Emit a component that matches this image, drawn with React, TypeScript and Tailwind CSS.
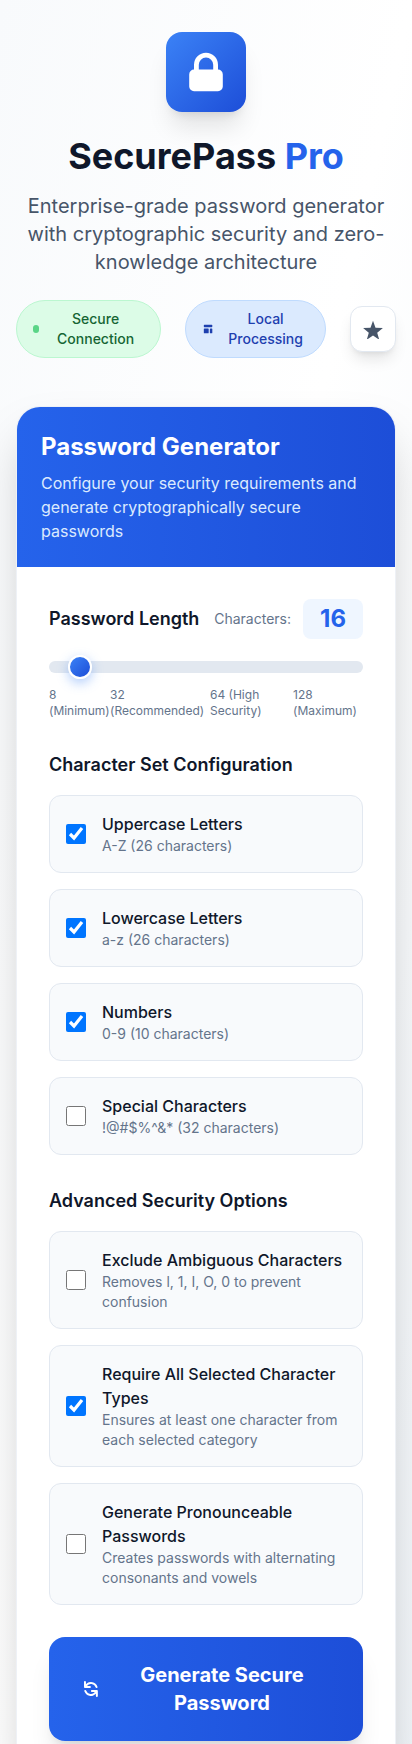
import { useState } from 'react';

type Option = { id: string; title: string; detail: string; on: boolean };

const characterSets: Option[] = [
  { id: 'uppercase', title: 'Uppercase Letters', detail: 'A-Z (26 characters)', on: true },
  { id: 'lowercase', title: 'Lowercase Letters', detail: 'a-z (26 characters)', on: true },
  { id: 'numbers', title: 'Numbers', detail: '0-9 (10 characters)', on: true },
  { id: 'special', title: 'Special Characters', detail: '!@#$%^&* (32 characters)', on: false },
];

const advanced: Option[] = [
  {
    id: 'ambiguous',
    title: 'Exclude Ambiguous Characters',
    detail: 'Removes l, 1, I, O, 0 to prevent confusion',
    on: false,
  },
  {
    id: 'require-all',
    title: 'Require All Selected Character Types',
    detail: 'Ensures at least one character from each selected category',
    on: true,
  },
  {
    id: 'pronounceable',
    title: 'Generate Pronounceable Passwords',
    detail: 'Creates passwords with alternating consonants and vowels',
    on: false,
  },
];

function OptionCard({ option }: { option: Option }) {
  return (
    <label
      htmlFor={option.id}
      className="flex cursor-pointer items-center gap-4 rounded-xl border border-[#e2e8f0] bg-[#f8fafc] p-4"
    >
      <input id={option.id} type="checkbox" defaultChecked={option.on} className="size-5 shrink-0" />
      <span className="flex-1">
        <span className="block font-medium text-[#0f172a]">{option.title}</span>
        <span className="block text-sm text-[#64748b]">{option.detail}</span>
      </span>
    </label>
  );
}

function OptionSection({ title, options }: { title: string; options: Option[] }) {
  return (
    <section className="mt-8">
      <h3 className="mb-4 text-lg font-semibold text-[#0f172a]">{title}</h3>
      <div className="grid gap-4">
        {options.map((option) => (
          <OptionCard key={option.id} option={option} />
        ))}
      </div>
    </section>
  );
}

const sliderClasses =
  'h-3 w-full cursor-pointer appearance-none rounded-lg bg-[#e2e8f0] ' +
  '[&::-webkit-slider-thumb]:size-6 [&::-webkit-slider-thumb]:appearance-none [&::-webkit-slider-thumb]:rounded-full ' +
  '[&::-webkit-slider-thumb]:border-2 [&::-webkit-slider-thumb]:border-solid [&::-webkit-slider-thumb]:border-white ' +
  '[&::-webkit-slider-thumb]:bg-[linear-gradient(135deg,#3b82f6,#1d4ed8)] ' +
  '[&::-webkit-slider-thumb]:shadow-[0_4px_12px_rgba(59,130,246,0.4)]';

export default function App() {
  const [length, setLength] = useState(16);

  return (
    <div className="min-h-screen bg-[linear-gradient(to_bottom_right,#f8fafc,#ffffff,#f1f5f9)] px-4 py-8 font-['Inter',sans-serif]">
      <header className="flex flex-col items-center text-center">
        <div className="mb-6 flex size-20 items-center justify-center rounded-2xl bg-[linear-gradient(to_bottom_right,#3b82f6,#1d4ed8)] shadow-xl">
          <svg className="size-12 text-white" fill="currentColor" viewBox="0 0 20 20" aria-hidden="true">
            <path
              fillRule="evenodd"
              clipRule="evenodd"
              d="M5 9V7a5 5 0 0110 0v2a2 2 0 012 2v5a2 2 0 01-2 2H5a2 2 0 01-2-2v-5a2 2 0 012-2zm8-2v2H7V7a3 3 0 016 0z"
            />
          </svg>
        </div>
        <h1 className="mb-4 text-4xl font-bold text-[#0f172a]">
          SecurePass <span className="text-[#2563eb]">Pro</span>
        </h1>
        <p className="mb-6 text-xl text-[#475569]">
          Enterprise-grade password generator with cryptographic security and zero-knowledge architecture
        </p>
        <div className="flex w-full items-center justify-center gap-6">
          <div className="flex items-center rounded-full border border-[#bbf7d0] bg-[#dcfce7] px-4 py-2 text-sm font-medium text-[#166534]">
            <span className="mr-2 h-2 w-2 rounded-full bg-[#22c55e] opacity-70" />
            Secure Connection
          </div>
          <div className="flex items-center rounded-full border border-[#bfdbfe] bg-[#dbeafe] px-4 py-2 text-sm font-medium text-[#1e40af]">
            <svg className="mr-2 h-4 w-4" fill="currentColor" viewBox="0 0 20 20" aria-hidden="true">
              <path d="M3 4a1 1 0 011-1h12a1 1 0 011 1v2a1 1 0 01-1 1H4a1 1 0 01-1-1V4zM3 10a1 1 0 011-1h6a1 1 0 011 1v6a1 1 0 01-1 1H4a1 1 0 01-1-1v-6zM14 9a1 1 0 00-1 1v6a1 1 0 001 1h2a1 1 0 001-1v-6a1 1 0 00-1-1h-2z" />
            </svg>
            Local Processing
          </div>
          <button
            type="button"
            aria-label="Favorite"
            className="shrink-0 rounded-xl border border-[#e2e8f0] bg-white p-3 text-[#475569] shadow-lg"
          >
            <svg className="size-5" fill="currentColor" viewBox="0 0 20 20" aria-hidden="true">
              <path d="M10 1.8l2.5 6.9 7.4.3-5.7 4.7 2 7L10 16.6l-6.2 4.1 2-7L.1 9l7.4-.3L10 1.8z" />
            </svg>
          </button>
        </div>
      </header>

      <main className="mt-12 overflow-hidden rounded-3xl border border-[#e2e8f0]/60 bg-white shadow-2xl">
        <div className="bg-[linear-gradient(to_right,#2563eb,#1d4ed8)] p-6">
          <h2 className="mb-2 text-2xl font-bold text-white">Password Generator</h2>
          <p className="text-[#dbeafe]">
            Configure your security requirements and generate cryptographically secure passwords
          </p>
        </div>

        <div className="p-8">
          <div className="mb-4 flex items-center justify-between">
            <label htmlFor="length" className="text-lg font-semibold text-[#0f172a]">
              Password Length
            </label>
            <div className="flex items-center gap-3">
              <span className="text-sm text-[#64748b]">Characters:</span>
              <output
                htmlFor="length"
                className="min-w-15 rounded-lg bg-[#eff6ff] px-3 py-1 text-center text-2xl font-bold text-[#2563eb]"
              >
                {length}
              </output>
            </div>
          </div>
          <div className="flex h-6 items-center">
            <input
              id="length"
              type="range"
              min={8}
              max={128}
              value={length}
              onChange={(e) => setLength(Number(e.target.value))}
              className={sliderClasses}
            />
          </div>
          <div className="mt-2 grid grid-cols-[61fr_100fr_83fr_70fr] text-xs text-[#64748b]">
            <span>8 (Minimum)</span>
            <span>32 (Recommended)</span>
            <span className="pr-4">64 (High Security)</span>
            <span>128 (Maximum)</span>
          </div>

          <OptionSection title="Character Set Configuration" options={characterSets} />
          <OptionSection title="Advanced Security Options" options={advanced} />

          <button
            type="button"
            className="mt-8 flex w-full items-center justify-center rounded-2xl bg-[linear-gradient(to_right,#2563eb,#1d4ed8)] px-8 py-6 text-xl font-bold text-white shadow-xl"
          >
            <svg className="mr-3 h-6 w-6" fill="currentColor" viewBox="0 0 20 20" aria-hidden="true">
              <path
                fillRule="evenodd"
                clipRule="evenodd"
                d="M4 2a1 1 0 011 1v2.101a7.002 7.002 0 0111.601 2.566 1 1 0 11-1.885.666A5.002 5.002 0 005.999 7H9a1 1 0 010 2H4a1 1 0 01-1-1V3a1 1 0 011-1zm.008 9.057a1 1 0 011.276.61A5.002 5.002 0 0014.001 13H11a1 1 0 110-2h5a1 1 0 011 1v5a1 1 0 11-2 0v-2.101a7.002 7.002 0 01-11.601-2.566 1 1 0 01.61-1.276z"
              />
            </svg>
            Generate Secure Password
          </button>
        </div>
      </main>
    </div>
  );
}
